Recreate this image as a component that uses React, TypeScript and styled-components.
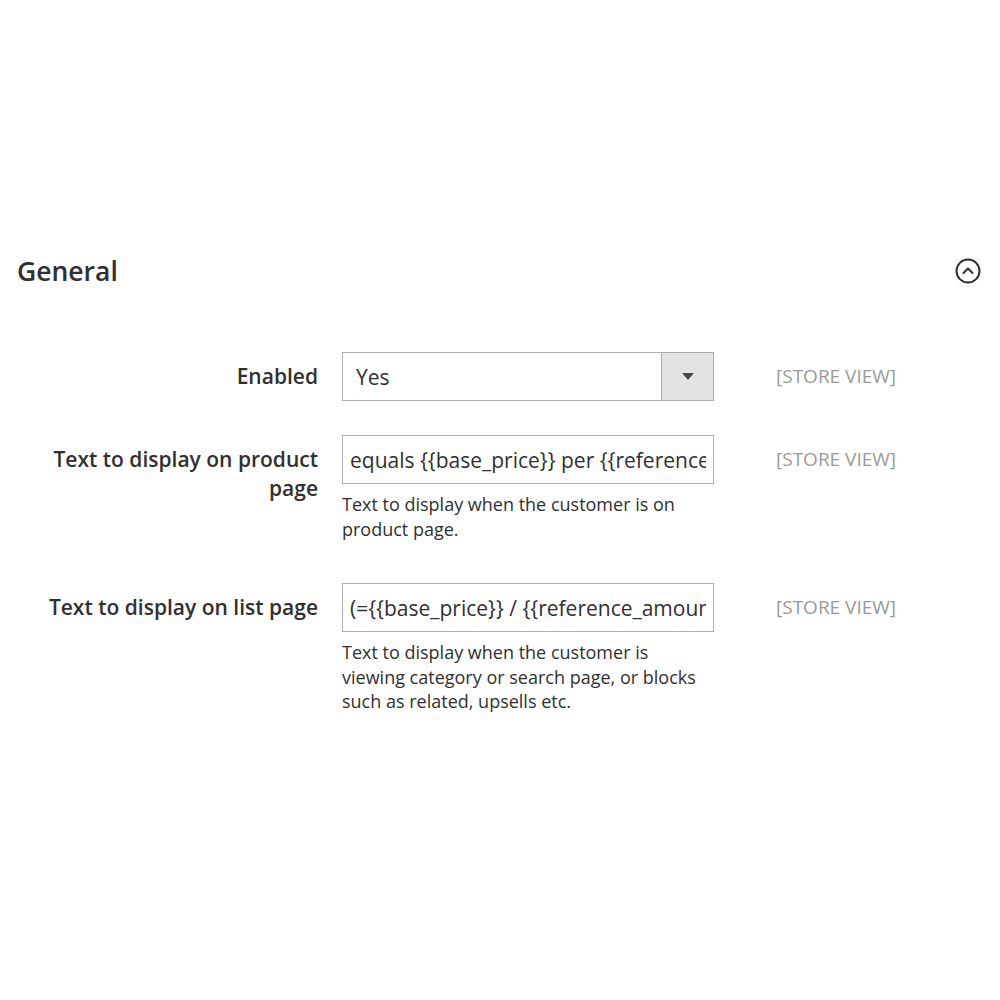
import styled, { createGlobalStyle } from "styled-components";

const GlobalStyle = createGlobalStyle`
  html, body {
    margin: 0;
    padding: 0;
    background: #ffffff;
  }
  body {
    font-family: "Open Sans", "Liberation Sans", sans-serif;
    color: #303030;
  }
`;

const Page = styled.div`
  width: 1000px;
  height: 1000px;
  padding-top: 255px;
  box-sizing: border-box;
`;

const SectionHeader = styled.div`
  display: flex;
  align-items: center;
  justify-content: space-between;
  padding: 0 18px 0 17px;
  height: 32px;
`;

const Title = styled.h2`
  margin: 0;
  font-size: 26.5px;
  line-height: 32px;
  font-weight: 600;
  color: #303030;
`;

const ToggleButton = styled.button`
  width: 28px;
  height: 28px;
  padding: 0;
  border: none;
  background: none;
  display: flex;
  align-items: center;
  justify-content: center;
  cursor: pointer;
`;

const Fieldset = styled.div`
  margin-top: 65px;
  display: flex;
  flex-direction: column;
  gap: 34px;
`;

const Row = styled.div`
  display: grid;
  grid-template-columns: 298px 372px auto;
  column-gap: 24px;
  padding-left: 20px;
`;

const Label = styled.label`
  text-align: right;
  font-size: 21px;
  line-height: 29px;
  font-weight: 600;
  color: #303030;
  padding-top: 10px;
`;

const Control = styled.div`
  display: flex;
  flex-direction: column;
`;

const SelectBox = styled.div`
  display: flex;
  height: 49px;
  border: 1px solid #adadad;
  box-sizing: border-box;
  background: #fff;
`;

const SelectValue = styled.div`
  flex: 1;
  display: flex;
  align-items: center;
  padding-left: 13px;
  font-size: 21px;
`;

const SelectAddon = styled.div`
  width: 51px;
  background: #e3e3e3;
  border-left: 1px solid #adadad;
  display: flex;
  align-items: center;
  justify-content: center;
`;

const Arrow = styled.span`
  width: 0;
  height: 0;
  border-left: 6px solid transparent;
  border-right: 6px solid transparent;
  border-top: 7px solid #514943;
`;

const TextInput = styled.input`
  height: 49px;
  width: 100%;
  box-sizing: border-box;
  border: 1px solid #adadad;
  padding: 0 7px;
  font-family: "Open Sans", "Liberation Sans", sans-serif;
  font-size: 21px;
  color: #303030;
  outline: none;
`;

const Note = styled.div`
  margin: 8px 0 8px;
  font-size: 18px;
  line-height: 24.5px;
  color: #303030;
`;

const Scope = styled.div`
  padding-left: 38px;
  padding-top: 12px;
  font-size: 19px;
  line-height: 24px;
  color: #9a9a9a;
`;

const ChevronCircle = () => (
  <svg width="26" height="26" viewBox="0 0 26 26" fill="none">
    <circle cx="13" cy="13" r="11.5" stroke="#303030" strokeWidth="2" />
    <path
      d="M8.5 15 L13 10.5 L17.5 15"
      stroke="#303030"
      strokeWidth="2"
      strokeLinecap="round"
      strokeLinejoin="round"
    />
  </svg>
);

const App = () => {
  return (
    <>
      <GlobalStyle />
      <Page>
        <SectionHeader>
          <Title>General</Title>
          <ToggleButton>
            <ChevronCircle />
          </ToggleButton>
        </SectionHeader>
        <Fieldset>
          <Row>
            <Label>Enabled</Label>
            <Control>
              <SelectBox>
                <SelectValue>Yes</SelectValue>
                <SelectAddon>
                  <Arrow />
                </SelectAddon>
              </SelectBox>
            </Control>
            <Scope>[STORE VIEW]</Scope>
          </Row>
          <Row>
            <Label>Text to display on product page</Label>
            <Control>
              <TextInput
                readOnly
                value="equals {{base_price}} per {{reference_amount}} {{reference_unit}}"
              />
              <Note>Text to display when the customer is on product page.</Note>
            </Control>
            <Scope>[STORE VIEW]</Scope>
          </Row>
          <Row>
            <Label>Text to display on list page</Label>
            <Control>
              <TextInput
                readOnly
                value="(={{base_price}} / {{reference_amount}} {{reference_unit}})"
              />
              <Note>
                Text to display when the customer is viewing category or search
                page, or blocks such as related, upsells etc.
              </Note>
            </Control>
            <Scope>[STORE VIEW]</Scope>
          </Row>
        </Fieldset>
      </Page>
    </>
  );
};

export default App;
